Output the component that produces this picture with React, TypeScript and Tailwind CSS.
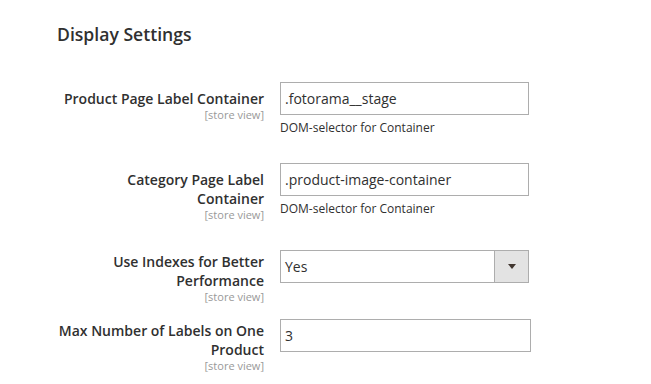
const FONT = "font-['Open_Sans',sans-serif]";

type Row = {
  label: string;
  control: 'text' | 'select';
  value: string;
  note?: string;
  space: string;
  width: string;
  pad: string;
};

const ROWS: Row[] = [
  { label: 'Product Page Label Container', control: 'text', value: '.fotorama__stage', note: 'DOM-selector for Container', space: 'h-[81px]', width: 'w-[249px]', pad: 'pt-[7px]' },
  { label: 'Category Page Label Container', control: 'text', value: '.product-image-container', note: 'DOM-selector for Container', space: 'h-[87px]', width: 'w-[249px]', pad: 'pt-[7px]' },
  { label: 'Use Indexes for Better Performance', control: 'select', value: 'Yes', space: 'h-[69px]', width: 'w-[249px]', pad: 'pt-[2px]' },
  { label: 'Max Number of Labels on One Product', control: 'text', value: '3', space: 'h-[65px]', width: 'w-[251px]', pad: 'pt-[2px]' },
];

function Field({ row }: { row: Row }) {
  return (
    <div className={`flex ${row.space}`}>
      <div className="w-[264px] flex justify-end shrink-0">
        <div className={`w-[206px] text-right ${row.pad}`}>
          <div className="text-[14px] leading-[19px] font-semibold text-[#303030]">{row.label}</div>
          <div className="text-[11px] leading-[13px] text-[#999]">[store view]</div>
        </div>
      </div>
      <div className={`ml-4 ${row.width}`}>
        {row.control === 'text' ? (
          <div className="h-[33px] border border-[#adadad] bg-white flex items-center pl-1 text-[14px] text-[#303030]">
            {row.value}
          </div>
        ) : (
          <div className="h-[33px] border border-[#adadad] bg-white flex items-center text-[14px] text-[#303030]">
            <span className="flex-1 pl-1">{row.value}</span>
            <span className="w-[34px] h-full bg-[#e3e3e3] border-l border-[#adadad] flex items-center justify-center">
              <svg width="8" height="5" viewBox="0 0 8 5">
                <path d="M0 0 L8 0 L4 5 Z" fill="#41362f" />
              </svg>
            </span>
          </div>
        )}
        {row.note && (
          <div className="mt-[5px] text-[12px] leading-[16px] text-[#303030]">{row.note}</div>
        )}
      </div>
    </div>
  );
}

export default function App() {
  return (
    <div className={`w-[651px] h-[384px] bg-white overflow-hidden ${FONT}`}>
      <h2 className="pl-[57px] pt-[23px] text-[17.6px] leading-[23px] font-semibold text-[#303030]">
        Display Settings
      </h2>
      <div className="mt-[36px]">
        {ROWS.map(row => (
          <Field key={row.label} row={row} />
        ))}
      </div>
    </div>
  );
}
